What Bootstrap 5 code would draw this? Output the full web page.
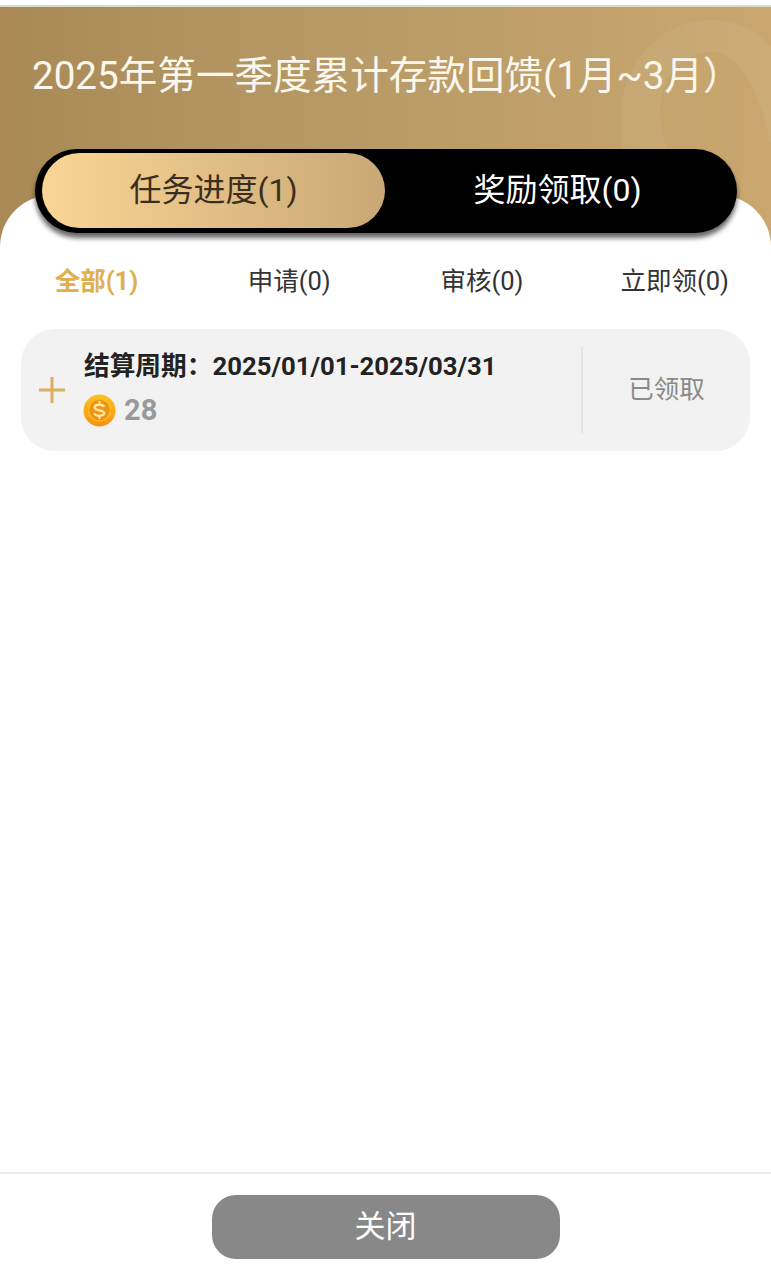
<!DOCTYPE html>
<html lang="zh">
<head>
<meta charset="utf-8">
<title>累计存款回馈</title>
<link href="https://cdn.jsdelivr.net/npm/bootstrap@5.3.0/dist/css/bootstrap.min.css" rel="stylesheet">
<style>
html,body{height:1280px;margin:0;overflow:hidden}
body{font-family:Roboto,"Noto Sans CJK SC",sans-serif;background:#fff;color:#222}
.page-shell{height:1280px}
.top-strip{height:7px;background:#fff;border-bottom:2px solid #ddd8cc;flex:none}
.hero{height:240px;flex:none;position:relative;overflow:hidden;background:linear-gradient(90deg,#a98a56 0%,#b79a66 45%,#c9a76f 100%)}
.hero-title{font-size:38.6px;font-weight:400;line-height:1;color:#fbf7ee;margin:0;padding:50px 0 0 32px;white-space:nowrap;position:relative}
.hero-swirl{position:absolute;left:0;top:0}
.switcher{position:relative;z-index:2;margin:53px 34px 0 35px;height:84px;background:#000;border-radius:42px;box-shadow:0 5px 5px rgba(0,0,0,.6);padding:4px 7px 5px}
.switch-on,.switch-off{height:75px;font-size:32px;line-height:75px;text-align:center;border-radius:38px}
.switch-on{width:343px;background:linear-gradient(90deg,#fbd595,#c9a876);color:#3a2f1d}
.switch-off{width:345px;color:#fff}
.sheet{background:#fff;margin-top:-52px;border-radius:56px 56px 0 0;position:relative;z-index:1;height:52px;flex:none}
.filter-row{margin:15px 0 0;font-size:25.5px;color:#333;line-height:38px;flex:none;text-align:center}
.filter-on{color:#dfb04f;font-weight:700}
.task-card{margin:29px 21px 0;height:122px;background:#f2f2f2;border-radius:34px;flex:none}
.plus-box{width:63px;flex:none;padding-left:17px}
.task-main{flex:1 1 auto;min-width:0;padding-bottom:4px}
.task-period{font-size:25.7px;font-weight:700;color:#222;line-height:34px;white-space:nowrap}
.task-amount{font-size:29px;font-weight:700;color:#999;line-height:34px;margin-top:10px}
.coin-icon{margin-left:-1px}
.task-state{width:169px;flex:none;height:86px;border-left:2px solid #e4e4e4;font-size:25.5px;color:#8a8a8a;padding-bottom:2px}
.spacer-fill{flex:1 1 auto}
.foot-bar{height:108px;border-top:2px solid #ececec;flex:none}
.close-btn{width:348px;height:64px;background:#888;color:#fff;font-size:31px;border:0;border-radius:24px;margin-top:21px;padding:0}
</style>
</head>
<body>
<div class="page-shell d-flex flex-column">
  <div class="top-strip"></div>
  <div class="hero">
    <svg class="hero-swirl" width="771" height="240" viewBox="0 7 771 240"><path d="M622 160V110C622 60 665 20 710 20C735 20 757 30 771 47V143H770C764 110 745 52 713 52C680 52 660 80 660 110C660 125 665 145 672 160Z" fill="#fff" fill-opacity=".06"/></svg>
    <h1 class="hero-title">2025年第一季度累计存款回馈(1月~3月）</h1>
    <div class="switcher d-flex">
      <div class="switch-on">任务进度(1)</div>
      <div class="switch-off">奖励领取(0)</div>
    </div>
  </div>
  <div class="sheet"></div>
  <div class="filter-row row g-0">
    <div class="col-3 filter-on">全部(1)</div>
    <div class="col-3">申请(0)</div>
    <div class="col-3">审核(0)</div>
    <div class="col-3">立即领(0)</div>
  </div>
  <div class="task-card d-flex align-items-center">
    <div class="plus-box d-flex">
      <svg width="28" height="28" viewBox="0 0 28 28"><path d="M14 1v26M1 14h26" stroke="#dcae60" stroke-width="3" fill="none"/></svg>
    </div>
    <div class="task-main">
      <div class="task-period">结算周期：2025/01/01-2025/03/31</div>
      <div class="task-amount d-flex align-items-center gap-2">
        <svg class="coin-icon" width="33" height="33" viewBox="0 0 33 33">
          <defs><linearGradient id="cg" x1="0" y1="0" x2="0" y2="1"><stop offset="0" stop-color="#ffc21f"/><stop offset="1" stop-color="#f7920f"/></linearGradient></defs>
          <circle cx="16.5" cy="16.5" r="16" fill="url(#cg)"/>
          <circle cx="16.5" cy="16" r="11" fill="#ef9412" stroke="#fdb92c" stroke-width="1.5"/>
          <path d="M21 12.800c-.8-2.600-9.200-3-9.400.6-.2 3.600 9.800 2.300 9.600 5.900-.2 3.200-9.200 3.100-10-.1" fill="none" stroke="#ffe99a" stroke-width="2.400"/>
          <path d="M16.500 7v3M16.500 22v3" stroke="#ffe99a" stroke-width="2"/>
        </svg>
        <span>28</span>
      </div>
    </div>
    <div class="task-state d-flex align-items-center justify-content-center">已领取</div>
  </div>
  <div class="spacer-fill"></div>
  <div class="foot-bar d-flex justify-content-center">
    <button type="button" class="btn close-btn">关闭</button>
  </div>
</div>
<script src="https://cdn.jsdelivr.net/npm/bootstrap@5.3.0/dist/js/bootstrap.bundle.min.js"></script>
</body>
</html>
